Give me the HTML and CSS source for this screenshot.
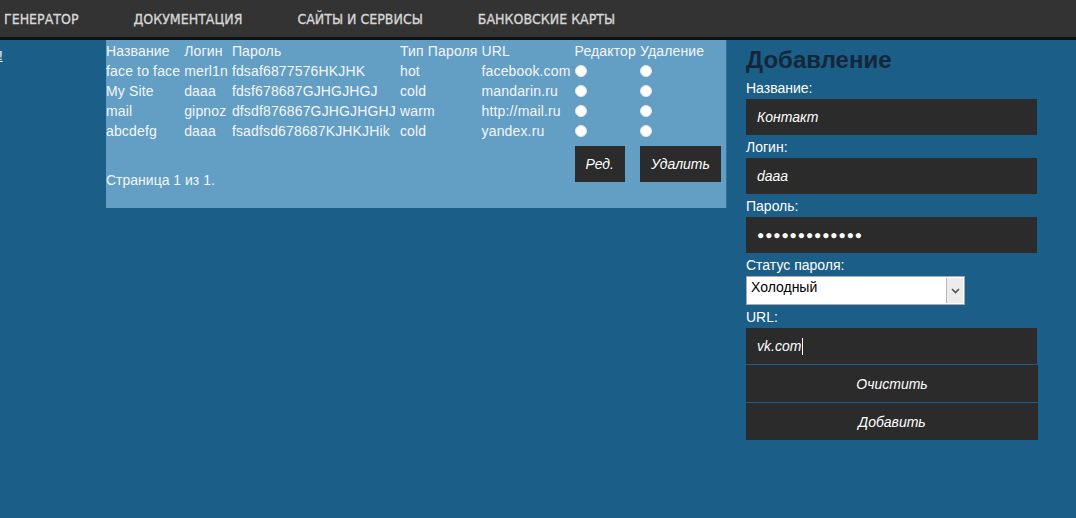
FILE: index.html
```html
<!DOCTYPE html>
<html lang="ru">
<head>
<meta charset="utf-8">
<title>Пароли</title>
<link rel="stylesheet" href="styles.css">
</head>
<body>
<nav class="nav">
  <a class="nav-item" href="#">ГЕНЕРАТОР</a>
  <a class="nav-item" href="#">ДОКУМЕНТАЦИЯ</a>
  <a class="nav-item" href="#">САЙТЫ И СЕРВИСЫ</a>
  <a class="nav-item" href="#">БАНКОВСКИЕ КАРТЫ</a>
</nav>
<main class="main">
  <aside class="side"><a class="side-link" href="#">!</a></aside>
  <section class="panel">
    <table class="grid">
      <thead>
        <tr><th>Название</th><th>Логин</th><th>Пароль</th><th>Тип Пароля</th><th>URL</th><th>Редактор</th><th>Удаление</th></tr>
      </thead>
      <tbody>
        <tr><td>face to face</td><td>merl1n</td><td>fdsaf6877576HKJHK</td><td>hot</td><td>facebook.com</td><td><input class="radio" type="radio" name="ed"></td><td><input class="radio" type="radio" name="del"></td></tr>
        <tr><td>My Site</td><td>daaa</td><td>fdsf678687GJHGJHGJ</td><td>cold</td><td>mandarin.ru</td><td><input class="radio" type="radio" name="ed"></td><td><input class="radio" type="radio" name="del"></td></tr>
        <tr><td>mail</td><td>gipnoz</td><td>dfsdf876867GJHGJHGHJ</td><td>warm</td><td>http://mail.ru</td><td><input class="radio" type="radio" name="ed"></td><td><input class="radio" type="radio" name="del"></td></tr>
        <tr><td>abcdefg</td><td>daaa</td><td>fsadfsd678687KJHKJHik</td><td>cold</td><td>yandex.ru</td><td><input class="radio" type="radio" name="ed"></td><td><input class="radio" type="radio" name="del"></td></tr>
        <tr class="actions">
          <td colspan="5" class="pager">Страница 1 из 1.</td>
          <td><button class="btn">Ред.</button></td>
          <td><button class="btn">Удалить</button></td>
        </tr>
      </tbody>
    </table>
  </section>
  <section class="form">
    <h1 class="form-title">Добавление</h1>
    <label class="label">Название:</label>
    <div class="field">Контакт</div>
    <label class="label">Логин:</label>
    <div class="field">daaa</div>
    <label class="label">Пароль:</label>
    <div class="field dots">●●●●●●●●●●●●●</div>
    <label class="label">Статус пароля:</label>
    <div class="select">
      <span class="select-value">Холодный</span>
      <span class="select-arrow"><svg width="9" height="6" viewBox="0 0 9 6"><path d="M1 1 L4.5 4.5 L8 1" fill="none" stroke="#555" stroke-width="1.6"/></svg></span>
    </div>
    <label class="label">URL:</label>
    <div class="field">vk.com<span class="caret"></span></div>
    <button class="wide-btn">Очистить</button>
    <button class="wide-btn">Добавить</button>
  </section>
</main>
</body>
</html>
```
FILE: styles.css
```css
html, body {
  margin: 0;
  padding: 0;
}
body {
  background: #1b5e87;
  font-family: "Liberation Sans", Arial, sans-serif;
  color: #fff;
  height: 518px;
  overflow: hidden;
}
.nav {
  height: 37px;
  background: #333333;
  border-bottom: 3px solid #111;
  display: flex;
  align-items: center;
  gap: 55px;
  padding-left: 4px;
}
.nav-item {
  font-family: "Liberation Sans Narrow", "DejaVu Sans Condensed", sans-serif;
  font-size: 14px;
  color: #d6d6d6;
  text-decoration: none;
  line-height: 18px;
  padding-top: 1px;
  -webkit-text-stroke: 0.3px #d6d6d6;
}
.main {
  display: flex;
  align-items: flex-start;
}
.side {
  width: 106px;
  padding-top: 8px;
  font-size: 13px;
}
.side-link {
  color: #fff;
  margin-left: -1px;
}
.panel {
  width: 620px;
  height: 167px;
  padding-top: 1px;
  background: #639ec4;
  box-shadow: 1px 0 0 #2f6f98;
}
.grid {
  border-collapse: collapse;
  font-size: 14px;
  letter-spacing: 0.15px;
  color: #f4f7fa;
}
.grid th, .grid td {
  padding: 0 4px 0 0;
  text-align: left;
  font-weight: normal;
  white-space: nowrap;
  height: 20px;
  line-height: 16px;
}
.grid th {
  height: 20px;
}
.radio {
  appearance: none;
  -webkit-appearance: none;
  width: 12px;
  height: 12px;
  margin: 0;
  border-radius: 50%;
  background: #fff;
  border: 1px solid #e6e6e6;
  display: block;
}
.actions td {
  vertical-align: top;
  height: auto;
  padding-top: 5px;
  padding-bottom: 6px;
}
.actions td.pager {
  vertical-align: bottom;
  padding-top: 0;
  padding-bottom: 0;
  letter-spacing: 0;
}
.btn {
  background: #2b2b2b;
  color: #fff;
  border: 0;
  height: 36px;
  padding: 0 11px;
  font-family: "Liberation Sans", Arial, sans-serif;
  font-size: 14px;
  font-style: italic;
  margin: 0;
  display: block;
}
.form {
  margin-left: 20px;
  width: 292px;
  display: flex;
  flex-direction: column;
  padding-top: 6px;
}
.form-title {
  margin: 0;
  font-size: 24px;
  line-height: 28px;
  font-weight: bold;
  color: #14273a;
  margin-bottom: 6px;
}
.label {
  font-size: 14px;
  line-height: 16px;
  margin-top: 4px;
  margin-bottom: 3px;
  color: #fff;
}
.form-title + .label {
  margin-top: 0;
}
.field {
  width: 280px;
  height: 36px;
  padding-left: 11px;
  background: #2b2b2b;
  font-size: 14px;
  font-style: italic;
  line-height: 36px;
  display: flex;
  align-items: center;
}
.dots {
  font-style: normal;
  font-size: 12px;
  letter-spacing: 0.9px;
}
.caret {
  width: 1px;
  height: 17px;
  background: #fff;
  margin-left: 1px;
}
.select {
  position: relative;
  width: 217px;
  height: 27px;
  background: #fff;
  border: 1px solid #a9a9a9;
  color: #000;
  font-size: 14px;
}
.select-value {
  display: block;
  padding: 2px 0 0 4px;
  line-height: 16px;
}
.select-arrow {
  position: absolute;
  top: 1px;
  right: 1px;
  width: 16px;
  height: 25px;
  background: #ececec;
  border-left: 1px solid #b8b8b8;
  display: flex;
  align-items: center;
  justify-content: center;
}
.wide-btn {
  width: 292px;
  height: 37px;
  margin: 1px 0 0;
  border: 0;
  background: #2b2b2b;
  color: #fff;
  font-family: "Liberation Sans", Arial, sans-serif;
  font-size: 14px;
  font-style: italic;
  padding: 0;
}
```
